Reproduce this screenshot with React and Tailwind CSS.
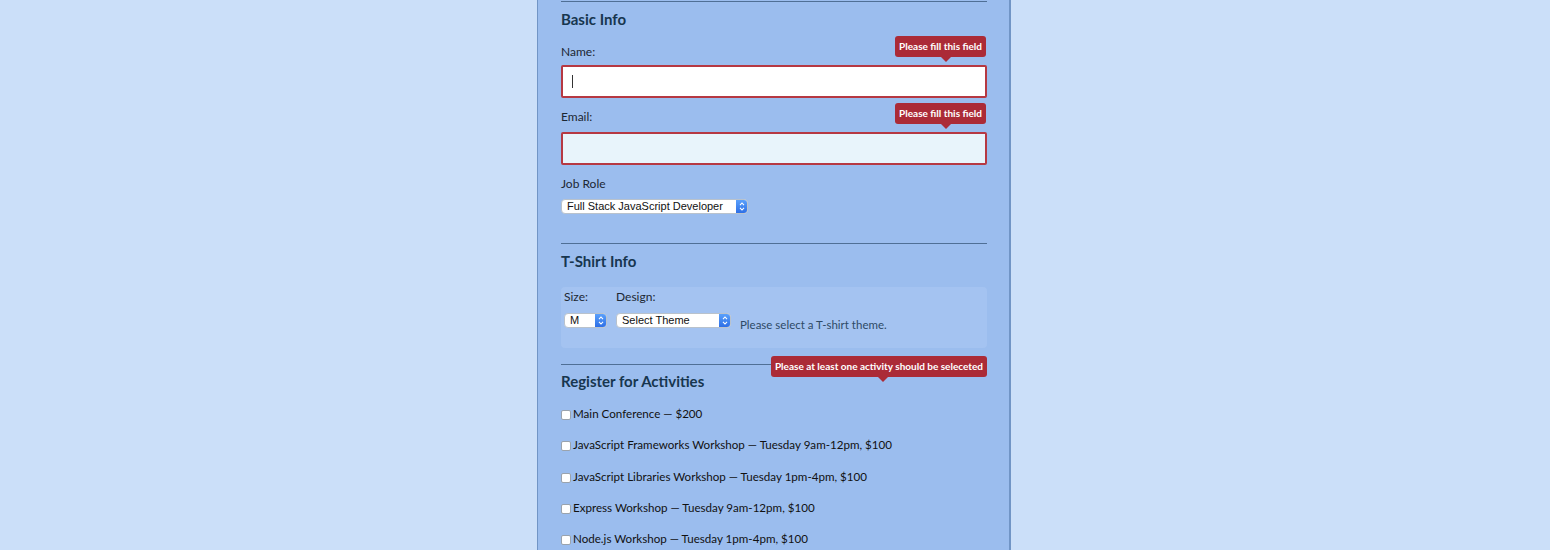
import React from "react";

function Tip({ children, className, arrow }) {
  return (
    <div className={"absolute z-10 " + className}>
      <div className="rounded-[3px] bg-[#ab2b37] px-[4px] h-[21px] flex items-center text-[10px] font-bold text-white whitespace-nowrap font-['Lato',sans-serif]">
        {children}
      </div>
      <div className={"absolute top-[21px] w-0 h-0 border-l-[5px] border-r-[5px] border-t-[5px] border-l-transparent border-r-transparent border-t-[#ab2b37] " + arrow}></div>
    </div>
  );
}

function MacSelect({ label, className }) {
  return (
    <div className={"flex h-[15px] rounded-[4px] border border-[#b9c2cc] bg-white overflow-hidden " + className}>
      <div className="flex-1 pl-[5px] text-[11px] leading-[13px] text-[#111] font-['Liberation_Sans',sans-serif] whitespace-nowrap">{label}</div>
      <div className="w-[11px] bg-gradient-to-b from-[#5aa0fb] to-[#2e6fe6] flex flex-col items-center justify-center gap-px">
        <svg width="6" height="4" viewBox="0 0 6 4"><path d="M1 3.2 L3 1 L5 3.2" fill="none" stroke="white" strokeWidth="1.1" /></svg>
        <svg width="6" height="4" viewBox="0 0 6 4"><path d="M1 0.8 L3 3 L5 0.8" fill="none" stroke="white" strokeWidth="1.1" /></svg>
      </div>
    </div>
  );
}

const activities = [
  "Main Conference — $200",
  "JavaScript Frameworks Workshop — Tuesday 9am-12pm, $100",
  "JavaScript Libraries Workshop — Tuesday 1pm-4pm, $100",
  "Express Workshop — Tuesday 9am-12pm, $100",
  "Node.js Workshop — Tuesday 1pm-4pm, $100",
];

export default function App() {
  return (
    <div className="min-h-screen bg-[#cbdff9] flex justify-center font-['Lato',sans-serif]">
      <div className="w-[474px] ml-[-2px] bg-[#9bbdee] border-l border-r-2 border-[#7195c6] pl-[23px] pr-[22px]">
        <div className="h-px mt-px bg-[#4f6f95]"></div>

        <h2 className="mt-[7px] text-[15px] leading-5 font-bold text-[#17364f]">Basic Info</h2>

        <div className="relative mt-[15px]">
          <Tip className="top-[-8px] right-px" arrow="right-[35px]">Please fill this field</Tip>
          <label className="block text-[12px] leading-4 text-[#1c2733]">Name:</label>
          <div className="mt-[5px] h-[33px] rounded-[2px] border-2 border-[#b63842] bg-white flex items-center pl-[9px]">
            <span className="w-px h-[13px] bg-[#333]"></span>
          </div>
        </div>

        <div className="relative mt-[11px]">
          <Tip className="top-[-6px] right-px" arrow="right-[35px]">Please fill this field</Tip>
          <label className="block text-[12px] leading-4 text-[#1c2733]">Email:</label>
          <div className="mt-[7px] h-[33px] rounded-[2px] border-2 border-[#b63842] bg-[#e8f4fb]"></div>
        </div>

        <label className="block mt-[11px] text-[12px] leading-4 text-[#1c2733]">Job Role</label>
        <MacSelect label="Full Stack JavaScript Developer" className="mt-[7px] w-[187px]" />

        <div className="h-px mt-[29px] bg-[#4f6f95]"></div>
        <h2 className="mt-[7px] text-[15px] leading-5 font-bold text-[#17364f]">T-Shirt Info</h2>

        <div className="mt-[16px] h-[61px] rounded-[4px] bg-[#a4c3f1] px-[3px] pt-[2px] flex gap-[9px]">
          <div>
            <div className="text-[12px] leading-4 text-[#1c2733]">Size:</div>
            <MacSelect label="M" className="mt-[8px] w-[43px]" />
          </div>
          <div>
            <div className="text-[12px] leading-4 text-[#1c2733]">Design:</div>
            <MacSelect label="Select Theme" className="mt-[8px] w-[115px]" />
          </div>
          <div className="pt-[28px] text-[11.5px] leading-4 text-[#2e4a66]">Please select a T-shirt theme.</div>
        </div>

        <div className="relative mt-[16px]">
          <Tip className="top-[-8px] right-0" arrow="right-[99px]">Please at least one activity should be seleceted</Tip>
          <div className="h-px bg-[#4f6f95]"></div>
          <h2 className="mt-[6px] text-[15px] leading-5 font-bold text-[#17364f]">Register for Activities</h2>
          <div className="mt-[7px]">
            {activities.map((a) => (
              <label key={a} className="flex items-center h-[31.3px] text-[11.6px] text-[#111]">
                <span className="mt-[3px] mr-[2px] w-[10px] h-[10px] rounded-[2px] border border-[#9aa3ad] bg-white"></span>
                {a}
              </label>
            ))}
          </div>
        </div>
      </div>
    </div>
  );
}
